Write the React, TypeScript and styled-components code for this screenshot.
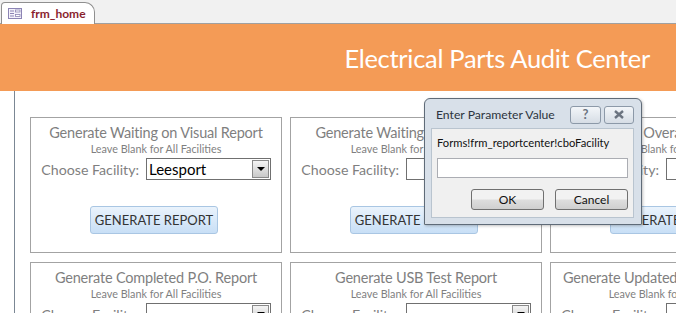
import styled, { createGlobalStyle } from "styled-components";

const GlobalStyle = createGlobalStyle`
    html, body {
        margin: 0;
        padding: 0;
        background: #ffffff;
        overflow: hidden;
    }
    body {
        font-family: Lato, "Open Sans", sans-serif;
    }
`

const StyledPage = styled.div`
    position: relative;
    width: 676px;
    height: 313px;
    overflow: hidden;
    background: #ffffff;
`

const StyledTabBar = styled.div`
    height: 23px;
    background: #f1f1f1;
    border-bottom: 1px solid #a0a0a0;
    display: flex;
    align-items: flex-end;
    padding-left: 1px;
`

const StyledTab = styled.div`
    height: 21px;
    width: 86px;
    margin-bottom: -1px;
    background: #ffffff;
    border: 1px solid #8f8f8f;
    border-bottom: none;
    border-radius: 4px 10px 0 0;
    display: flex;
    align-items: center;
    gap: 9px;
    padding-left: 6px;
    font-size: 12px;
    font-weight: bold;
    color: #8a1f2e;
`

const StyledHeader = styled.div`
    height: 67px;
    background: #f49b56;
    display: flex;
    align-items: center;
    justify-content: flex-end;
    padding-right: 26px;
    font-size: 25.5px;
    letter-spacing: -0.3px;
    color: #ffffff;
`

const StyledBody = styled.div`
    padding-left: 14px;
    height: 222px;
`

const StyledSection = styled.div`
    height: 100%;
    border-left: 1px solid #7b8794;
    padding: 26px 0 0 15px;
    display: grid;
    grid-template-columns: repeat(3, 252px);
    grid-auto-rows: 136px;
    column-gap: 8px;
    row-gap: 9px;
`

const StyledCard = styled.div`
    border: 1px solid #a3a3a3;
    display: flex;
    flex-direction: column;
    color: #7f7f7f;
`

const StyledCardTitle = styled.div<{ $span?: number }>`
    width: ${p => (p.$span ? `${p.$span}px` : "100%")};
    margin-top: 5px;
    height: 20px;
    line-height: 20px;
    text-align: center;
    font-size: 14.5px;
    letter-spacing: -0.2px;
    white-space: nowrap;
`

const StyledCardHint = styled.div<{ $span?: number }>`
    width: ${p => (p.$span ? `${p.$span}px` : "100%")};
    height: 12px;
    line-height: 12px;
    text-align: center;
    font-size: 10.8px;
    white-space: nowrap;
`

const StyledFieldRow = styled.div`
    display: flex;
    align-items: center;
    margin-top: 3px;
`

const StyledFieldLabel = styled.div`
    width: 108px;
    margin-right: 7px;
    text-align: right;
    font-size: 14.2px;
    white-space: nowrap;
`

const StyledSelect = styled.div`
    width: 123px;
    height: 20px;
    border: 1px solid #707070;
    background: #ffffff;
    display: flex;
    align-items: stretch;
    justify-content: space-between;
    flex-shrink: 0;
`

const StyledSelectValue = styled.div`
    padding-left: 2px;
    line-height: 20px;
    font-size: 15px;
    color: #000000;
`

const StyledSelectArrow = styled.div`
    width: 15px;
    margin: 1px;
    border: 1px solid #8a8a8a;
    background: linear-gradient(#f4f4f4, #c9c9c9);
    display: flex;
    align-items: center;
    justify-content: center;

    &::after {
        content: "";
        border-left: 4px solid transparent;
        border-right: 4px solid transparent;
        border-top: 4px solid #000000;
    }
`

const StyledGenerateButton = styled.div`
    margin: 26px 0 0 59px;
    width: 126px;
    height: 26px;
    border: 1px solid #a9c6e3;
    border-radius: 3px;
    background: linear-gradient(#eaf3fc, #c8dff6);
    display: flex;
    align-items: center;
    justify-content: center;
    font-size: 13px;
    color: #333333;
    white-space: nowrap;
`

const StyledDialog = styled.div`
    position: absolute;
    left: 424px;
    top: 98px;
    width: 216px;
    height: 125px;
    background: #d8e0e9;
    border: 1px solid #5f6b78;
    border-radius: 6px 6px 1px 1px;
    display: flex;
    flex-direction: column;
    box-shadow: 1px 1px 3px rgba(0, 0, 0, 0.25);
`

const StyledDialogTitleBar = styled.div`
    height: 29px;
    display: flex;
    align-items: center;
    padding: 0 7px 0 11px;
    font-size: 12.2px;
    color: #2c3440;
`

const StyledDialogTitle = styled.div`
    flex: 1;
    padding-top: 2px;
`

const StyledCaptionButton = styled.div<{ $wide?: boolean }>`
    width: ${p => (p.$wide ? 28 : 29)}px;
    height: 16px;
    margin-left: ${p => (p.$wide ? 3 : 0)}px;
    margin-top: 2px;
    border: 1px solid #8c99a8;
    border-radius: 3px;
    background: linear-gradient(#f3f6f9, #d6dde5);
    display: flex;
    align-items: center;
    justify-content: center;
    font-size: 13px;
    font-weight: bold;
    color: #6b7480;
    line-height: 1;
`

const StyledDialogClient = styled.div`
    flex: 1;
    margin: 0 7px 6px 6px;
    background: #f0f0f0;
    border: 1px solid #b9c4cf;
    padding: 6px 5px 0 5px;
    display: flex;
    flex-direction: column;
`

const StyledPrompt = styled.div`
    height: 15px;
    line-height: 15px;
    font-size: 11.2px;
    color: #111111;
    white-space: nowrap;
`

const StyledPromptInput = styled.div`
    margin-top: 8px;
    height: 18px;
    width: 189px;
    background: #ffffff;
    border: 1px solid #abadb3;
`

const StyledDialogActions = styled.div`
    margin-top: 11px;
    display: flex;
    justify-content: flex-end;
    gap: 11px;
`

const StyledDialogButton = styled.div`
    width: 71px;
    height: 19px;
    border: 1px solid #707070;
    border-radius: 3px;
    background: linear-gradient(#f2f2f2 45%, #dddddd 55%, #cfcfcf);
    display: flex;
    align-items: center;
    justify-content: center;
    font-size: 12px;
    color: #111111;
`

type Report = {
    title: string
    value?: string
    span?: number
}

const reports: Report[] = [
    { title: "Generate Waiting on Visual Report", value: "Leesport" },
    { title: "Generate Waiting on P.O. Report" },
    { title: "Generate Overall Audit Report", span: 250 },
    { title: "Generate Completed P.O. Report" },
    { title: "Generate USB Test Report" },
    { title: "Generate Updated Inventory Report", span: 246 },
]

const FormIcon = () => (
    <svg width="14" height="11" viewBox="0 0 14 11">
        <rect x="0.5" y="0.5" width="13" height="10" fill="#f4f2fb" stroke="#8c84b4" />
        <rect x="2" y="2.5" width="4" height="1" fill="#8c84b4" />
        <rect x="2" y="5" width="4" height="1" fill="#8c84b4" />
        <rect x="2" y="7.5" width="4" height="1" fill="#8c84b4" />
        <rect x="7.5" y="2" width="4.5" height="2" fill="#fff" stroke="#8c84b4" strokeWidth="0.8" />
        <rect x="7.5" y="6.5" width="4.5" height="2" fill="#fff" stroke="#8c84b4" strokeWidth="0.8" />
    </svg>
)

const CloseGlyph = () => (
    <svg width="12" height="9" viewBox="0 0 12 9">
        <path d="M2 1 L10 8 M10 1 L2 8" stroke="#6b7480" strokeWidth="2.4" fill="none" />
    </svg>
)

const ReportCard = ({ report }: { report: Report }) => (
    <StyledCard>
        <StyledCardTitle $span={report.span}>{report.title}</StyledCardTitle>
        <StyledCardHint $span={report.span}>Leave Blank for All Facilities</StyledCardHint>
        <StyledFieldRow>
            <StyledFieldLabel>Choose Facility:</StyledFieldLabel>
            <StyledSelect>
                <StyledSelectValue>{report.value ?? ""}</StyledSelectValue>
                <StyledSelectArrow />
            </StyledSelect>
        </StyledFieldRow>
        <StyledGenerateButton>GENERATE REPORT</StyledGenerateButton>
    </StyledCard>
)

export default function App() {
    return (
        <StyledPage>
            <GlobalStyle />
            <StyledTabBar>
                <StyledTab>
                    <FormIcon />
                    frm_home
                </StyledTab>
            </StyledTabBar>
            <StyledHeader>Electrical Parts Audit Center</StyledHeader>
            <StyledBody>
                <StyledSection>
                    {reports.map(r => (
                        <ReportCard key={r.title} report={r} />
                    ))}
                </StyledSection>
            </StyledBody>
            <StyledDialog>
                <StyledDialogTitleBar>
                    <StyledDialogTitle>Enter Parameter Value</StyledDialogTitle>
                    <StyledCaptionButton>?</StyledCaptionButton>
                    <StyledCaptionButton $wide>
                        <CloseGlyph />
                    </StyledCaptionButton>
                </StyledDialogTitleBar>
                <StyledDialogClient>
                    <StyledPrompt>Forms!frm_reportcenter!cboFacility</StyledPrompt>
                    <StyledPromptInput />
                    <StyledDialogActions>
                        <StyledDialogButton>OK</StyledDialogButton>
                        <StyledDialogButton>Cancel</StyledDialogButton>
                    </StyledDialogActions>
                </StyledDialogClient>
            </StyledDialog>
        </StyledPage>
    )
}
